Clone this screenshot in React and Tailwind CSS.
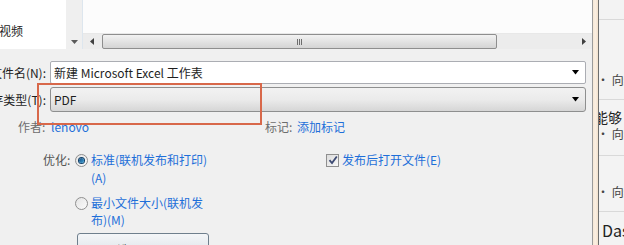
import React from 'react';

const font = { fontFamily: '"Noto Sans CJK SC", "Noto Sans", sans-serif' };

function Radio({ checked }) {
  return (
    <span className="relative mt-[3px] flex h-[13px] w-[13px] shrink-0 items-center justify-center rounded-full border border-[#8f8f8f] bg-gradient-to-br from-[#e4e4e4] to-[#fbfbfb]">
      {checked && (
        <span className="h-[5px] w-[5px] rounded-full bg-gradient-to-br from-[#1b4f80] to-[#3aa0d8] ring-1 ring-[#0f3e66]" />
      )}
    </span>
  );
}

function Checkbox() {
  return (
    <span className="flex h-[13px] w-[13px] shrink-0 items-center justify-center border border-[#8f8f8f] bg-gradient-to-br from-[#dcdcdc] to-[#f8f8f8]">
      <svg width="10" height="10" viewBox="0 0 10 10">
        <path d="M1.5 5.2 L4 8 L8.8 1.5" fill="none" stroke="#3d4a73" strokeWidth="1.8" />
      </svg>
    </span>
  );
}

function Arrow() {
  return (
    <svg width="8" height="5" viewBox="0 0 8 5" className="shrink-0">
      <path d="M0 0 H7 L3.5 4.5 Z" fill="#000" />
    </svg>
  );
}

export default function App() {
  return (
    <div className="flex h-[245px] w-[624px] overflow-hidden bg-[#f0f0f0] text-[12px] text-[#1e1e1e]" style={font}>
      {/* dialog */}
      <div className="relative flex w-[592px] shrink-0 flex-col">
        {/* browser area */}
        <div className="flex h-[49px] shrink-0">
          <div className="flex w-[66px] flex-col bg-white">
            <div className="mt-[23px] -ml-[1px] leading-[16px]">视频</div>
          </div>
          <div className="flex w-[16px] flex-col items-center justify-end bg-[#efefef] pb-[5px]">
            <svg width="7" height="4" viewBox="0 0 7 4"><path d="M0 0 H7 L3.5 4 Z" fill="#5a5a5a" /></svg>
          </div>
          <div className="w-[1px] bg-[#dde6ee]" />
          <div className="flex flex-1 flex-col">
            <div className="flex-1 bg-[#fcfcfc]" />
            <div className="flex h-[16px] items-center border-t border-[#e8e8e8] bg-[#ececec] pr-[6px]">
              <svg width="4" height="7" viewBox="0 0 4 7" className="ml-[7px]"><path d="M4 0 V7 L0 3.5 Z" fill="#404040" /></svg>
              <div className="ml-[8px] flex h-[15px] w-[395px] items-center justify-center rounded-[2px] border border-[#8e8e8e] bg-gradient-to-b from-[#f2f2f2] to-[#d4d4d4]">
                <div className="flex gap-[1px]">
                  <span className="h-[6px] w-[1px] bg-[#6d6d6d]" />
                  <span className="h-[6px] w-[1px] bg-[#6d6d6d]" />
                  <span className="h-[6px] w-[1px] bg-[#6d6d6d]" />
                </div>
              </div>
              <div className="flex-1" />
              <svg width="4" height="7" viewBox="0 0 4 7"><path d="M0 0 V7 L4 3.5 Z" fill="#404040" /></svg>
            </div>
          </div>
        </div>

        {/* file name */}
        <div className="mt-[12px] flex h-[23px] items-center pr-[6px]">
          <div className="flex w-[46px] justify-end overflow-hidden whitespace-nowrap">文件名(N):</div>
          <div className="ml-[4px] flex h-[23px] flex-1 items-center rounded-[2px] border border-[#abadb3] bg-white pl-[3px] pr-[5px]">
            <span className="flex-1">新建 Microsoft Excel 工作表</span>
            <Arrow />
          </div>
        </div>

        {/* type */}
        <div className="mt-[3px] flex h-[25px] items-center pr-[6px]">
          <div className="flex w-[46px] justify-end overflow-hidden whitespace-nowrap">保存类型(T):</div>
          <div className="ml-[4px] flex h-[25px] flex-1 items-center rounded-[3px] border border-[#8e8f8f] bg-gradient-to-b from-[#f2f2f2] via-[#ebebeb] to-[#d6d6d6] pl-[3px] pr-[5px]">
            <span className="flex-1">PDF</span>
            <Arrow />
          </div>
        </div>
        <div className="absolute left-[37px] top-[83px] h-[42px] w-[225px] border-2 border-[#d8684a]" />

        {/* author / tags */}
        <div className="mt-[6px] flex h-[18px] items-center">
          <span className="ml-[18px] w-[33px] text-[#6d6d6d]">作者:</span>
          <span className="text-[#1e6fd9]">lenovo</span>
          <span className="ml-[176px] w-[32px] text-[#6d6d6d]">标记:</span>
          <span className="text-[#1e6fd9]">添加标记</span>
        </div>

        {/* options */}
        <div className="mt-[15px] flex">
          <span className="ml-[43px] w-[32px] leading-[18px] text-[#555]">优化:</span>
          <div className="flex w-[140px] flex-col gap-[7px]">
            <div className="flex gap-[3px]">
              <Radio checked />
              <span className="leading-[18px] text-[#1e6fd9]">标准(联机发布和打印)<br />(A)</span>
            </div>
            <div className="flex gap-[3px]">
              <Radio />
              <span className="w-[124px] leading-[17px] text-[#1e6fd9]">最小文件大小(联机发布)(M)</span>
            </div>
          </div>
          <div className="ml-[111px] flex h-[18px] items-center gap-[3px]">
            <Checkbox />
            <span className="text-[#1e6fd9]">发布后打开文件(E)</span>
          </div>
        </div>

        {/* options button */}
        <div className="ml-[77px] mt-[5px] flex h-[23px] w-[132px] shrink-0 items-center justify-center rounded-[3px] border border-[#6f7f8d] bg-gradient-to-b from-[#f4f6f8] to-[#dde3e8] pt-[10px]">
          选项(O)...
        </div>
      </div>

      {/* window border */}
      <div className="flex w-[7px] shrink-0">
        <div className="w-[1px] bg-[#9b9b9b]" />
        <div className="flex-1 bg-gradient-to-r from-[#f6e8d6] via-[#fbefe2] to-[#f2e1cc]" />
        <div className="w-[1px] bg-[#6e6e6e]" />
      </div>

      {/* side panel */}
      <div className="flex flex-1 flex-col overflow-hidden whitespace-nowrap bg-[#f3f3f3] text-[#444]">
        <div className="h-[20px] border-b border-[#d9d9d9]" />
        <div className="-ml-[2px] flex h-[80px] items-end border-b border-[#d9d9d9] pb-[10px]">· 向经</div>
        <div className="flex h-[56px] flex-col border-b border-[#d9d9d9] pt-[8px]">
          <span className="-ml-[5px] text-[14px] leading-[18px] text-[#222]">能够</span>
          <span className="-ml-[2px] leading-[16px]">· 向经</span>
        </div>
        <div className="-ml-[2px] flex h-[56px] items-end border-b border-[#d9d9d9] pb-[10px]">· 向经</div>
        <div className="pl-[3px] pt-[7px] text-[16px] leading-[22px] text-[#222]">Das</div>
      </div>
    </div>
  );
}
